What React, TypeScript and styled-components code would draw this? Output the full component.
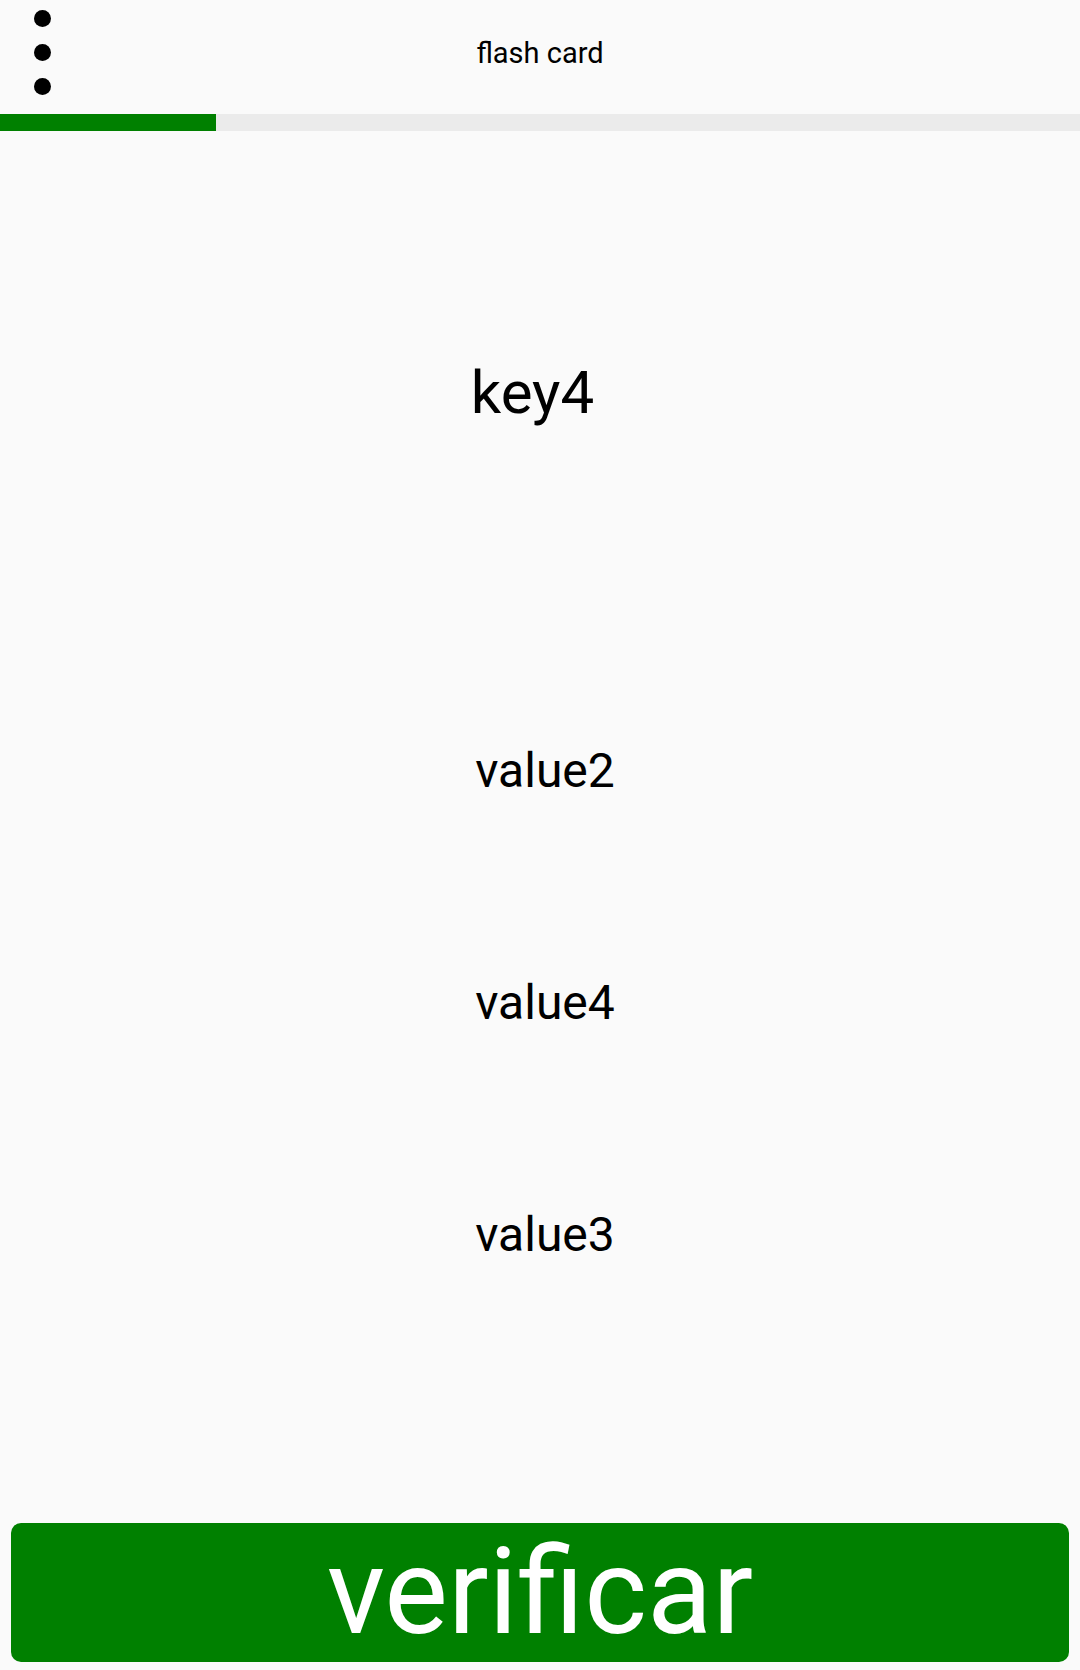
import React from 'react';
import styled, {createGlobalStyle} from 'styled-components';

// global

const GlobalStyle = createGlobalStyle`
    html, body {
        margin: 0;
        padding: 0;
        background: #fafafa;
    }
    body {
        font-family: Roboto, "Noto Sans", "Liberation Sans", sans-serif;
        color: #000;
    }
`;

// style

const Page = styled.div`
    display: flex;
    flex-direction: column;
    min-height: 1670px;
    box-sizing: border-box;
    padding-bottom: 8px;
`;

const Header = styled.header`
    display: grid;
    grid-template-columns: 1fr auto 1fr;
    align-items: center;
    height: 114px;
`;

const Menu = styled.div`
    display: flex;
    flex-direction: column;
    align-self: start;
    gap: 17px;
    padding: 10px 0 0 34px;
`;

const Dot = styled.span`
    width: 17px;
    height: 17px;
    border-radius: 50%;
    background: #000;
`;

const Title = styled.h1`
    margin: 0;
    font-size: 29px;
    font-weight: 400;
    line-height: 1;
    padding-bottom: 8px;
`;

const Track = styled.div`
    height: 17px;
    background: #ebebeb;
`;

const Fill = styled.div`
    height: 100%;
    background: #008000;
`;

const Question = styled.div`
    height: 523px;
    display: flex;
    align-items: center;
    justify-content: center;
    font-size: 60px;
    padding-right: 15px;
`;

const Option = styled.div`
    height: 232px;
    display: flex;
    align-items: center;
    justify-content: center;
    font-size: 48px;
    padding-left: 10px;
`;

const VerifyButton = styled.button`
    margin: auto 11px 0;
    height: 139px;
    border: none;
    border-radius: 10px;
    background: #008000;
    color: #fff;
    font-family: Roboto, "Noto Sans", "Liberation Sans", sans-serif;
    font-size: 120px;
    line-height: 139px;
    padding: 0;
`;

// component

const options = ['value2', 'value4', 'value3'];
const progress = 0.2;

export default function App(): React.ReactElement {
    return <Page>
        <GlobalStyle />
        <Header>
            <Menu>
                <Dot />
                <Dot />
                <Dot />
            </Menu>
            <Title>flash card</Title>
            <div />
        </Header>
        <Track>
            <Fill style={{width: `${progress * 100}%`}} />
        </Track>
        <Question>key4</Question>
        {options.map(o => <Option key={o}>{o}</Option>)}
        <VerifyButton>verificar</VerifyButton>
    </Page>;
}
